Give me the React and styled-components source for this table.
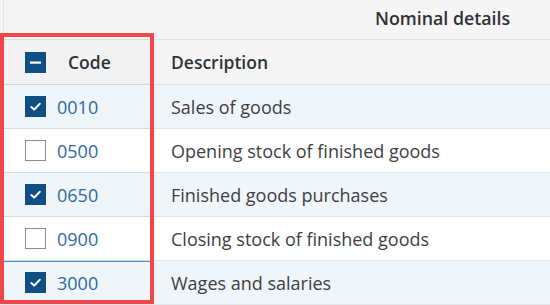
import React from "react";
import styled, { createGlobalStyle } from "styled-components";

const GlobalStyle = createGlobalStyle`
  html, body {
    margin: 0;
    padding: 0;
    background: #f5f5f5;
  }
  body {
    font-family: "Open Sans", "Noto Sans", sans-serif;
  }
`;

const rows = [
  { code: "0010", description: "Sales of goods", checked: true },
  { code: "0500", description: "Opening stock of finished goods", checked: false },
  { code: "0650", description: "Finished goods purchases", checked: true },
  { code: "0900", description: "Closing stock of finished goods", checked: false },
  { code: "3000", description: "Wages and salaries", checked: true, focused: true },
];

const Page = styled.div`
  position: relative;
  width: 550px;
  height: 305px;
  overflow: hidden;
  background: #f5f5f5;
  font-size: 18px;
`;

const GroupRow = styled.div`
  display: flex;
  height: 40px;
  box-sizing: border-box;
  border-bottom: 1px solid #dde2e6;
`;

const GroupSpacer = styled.div`
  width: 150px;
  box-sizing: border-box;
  border-left: 1px solid #e2e2e2;
  margin-left: 3px;
`;

const GroupTitle = styled.div`
  flex: 1;
  display: flex;
  align-items: center;
  padding-left: 222px;
  padding-bottom: 4px;
  font-weight: 600;
  font-size: 17.8px;
  color: #2e3338;
`;

const Row = styled.div`
  display: flex;
  height: ${(p) => p.$h || 44}px;
  box-sizing: border-box;
  border-bottom: 1px solid ${(p) => (p.$header ? "#dde2e6" : "#e4e7ea")};
  background: ${(p) => (p.$header ? "#f5f5f5" : p.$selected ? "#f0f5fa" : "#ffffff")};
`;

const CodeCell = styled.div`
  position: relative;
  display: flex;
  align-items: center;
  width: 152px;
  box-sizing: border-box;
  padding-left: 25px;
  gap: ${(p) => (p.$header ? 22 : 11)}px;
  background: ${(p) => (p.$header ? "#f3f3f3" : "inherit")};
  border-right: 1px solid #d9dcdf;
  box-shadow: ${(p) =>
    p.$focused
      ? "inset 0 0 0 1px #4a8fd0, 2px 0 3px rgba(0, 0, 0, 0.07)"
      : "2px 0 3px rgba(0, 0, 0, 0.07)"};
  color: ${(p) => (p.$header ? "#2e3338" : "#2c6aa3")};
  font-weight: ${(p) => (p.$header ? 600 : 400)};
  font-size: ${(p) => (p.$header ? 17.5 : 18)}px;
`;

const DescCell = styled.div`
  flex: 1;
  display: flex;
  align-items: center;
  padding-left: 19px;
  color: ${(p) => (p.$header ? "#2e3338" : "#3b3f44")};
  font-weight: ${(p) => (p.$header ? 600 : 400)};
  font-size: ${(p) => (p.$header ? 17.5 : 18)}px;
`;

const Box = styled.div`
  flex: none;
  width: 21px;
  height: 21px;
  box-sizing: border-box;
  display: flex;
  align-items: center;
  justify-content: center;
  background: ${(p) => (p.$on ? "#0e4f86" : "#ffffff")};
  border: ${(p) => (p.$on ? "none" : "1.5px solid #8c8c8c")};
`;

const Highlight = styled.div`
  position: absolute;
  left: 0;
  top: 33px;
  width: 154px;
  height: 271px;
  box-sizing: border-box;
  border: 4px solid #f0474b;
  pointer-events: none;
`;

const Checkbox = ({ checked, indeterminate }) => (
  <Box $on={checked || indeterminate}>
    {indeterminate ? (
      <svg width="13" height="13" viewBox="0 0 13 13">
        <rect x="1" y="5.5" width="11" height="2.2" fill="#fff" />
      </svg>
    ) : checked ? (
      <svg width="13" height="13" viewBox="0 0 13 13">
        <polyline
          points="2.3,7 5.2,9.6 10.8,3.8"
          fill="none"
          stroke="#fff"
          strokeWidth="2"
          strokeLinecap="round"
          strokeLinejoin="round"
        />
      </svg>
    ) : null}
  </Box>
);

export default function App() {
  return (
    <>
      <GlobalStyle />
      <Page>
        <GroupRow>
          <GroupSpacer />
          <GroupTitle>Nominal details</GroupTitle>
        </GroupRow>
        <Row $header $h={45}>
          <CodeCell $header>
            <Checkbox indeterminate />
            Code
          </CodeCell>
          <DescCell $header>Description</DescCell>
        </Row>
        {rows.map((r) => (
          <Row key={r.code} $selected={r.checked}>
            <CodeCell $focused={r.focused}>
              <Checkbox checked={r.checked} />
              {r.code}
            </CodeCell>
            <DescCell>{r.description}</DescCell>
          </Row>
        ))}
        <Highlight />
      </Page>
    </>
  );
}
